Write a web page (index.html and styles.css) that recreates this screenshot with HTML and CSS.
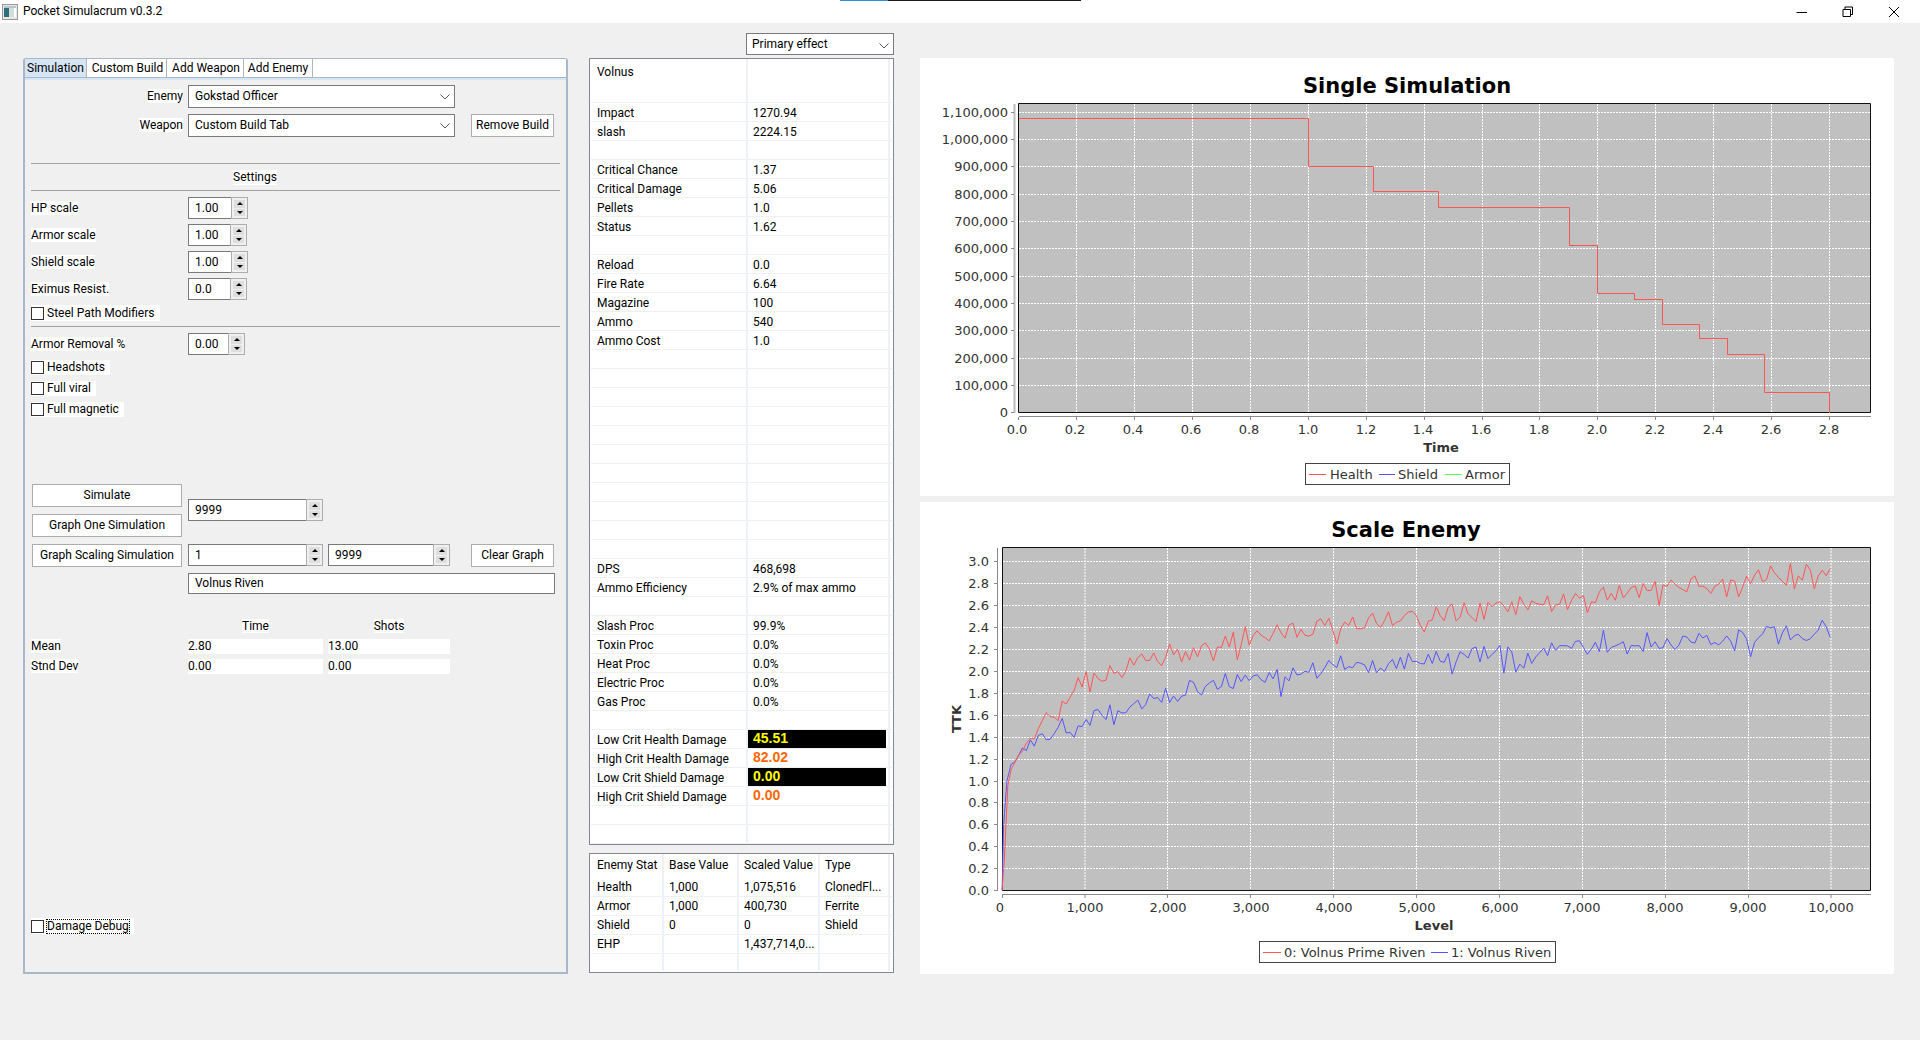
FILE: index.html
```html
<!DOCTYPE html>
<html lang="en">
<head>
<meta charset="utf-8">
<title>Pocket Simulacrum v0.3.2</title>
<link rel="stylesheet" href="styles.css">
</head>
<body>
<div class="taskstrip"><span class="strip-blue"></span><span class="strip-black"></span></div>
<header class="titlebar">
  <svg class="appicon" width="16" height="16" viewBox="0 0 16 16"><rect x="0.5" y="0.5" width="15" height="15" fill="#e8e8e8" stroke="#9a9a9a"/><rect x="2" y="2" width="12" height="2" fill="#b9c4cc"/><rect x="2" y="4" width="5" height="9" fill="#2f6f78"/><rect x="7" y="4" width="5" height="9" fill="#cfe0dc"/><rect x="12" y="4" width="2" height="9" fill="#fff"/></svg>
  <span class="apptitle">Pocket Simulacrum v0.3.2</span>
  <div class="winbtns">
    <svg width="12" height="12" viewBox="0 0 12 12"><path d="M0.5 6.5H11" stroke="#000" fill="none"/></svg>
    <svg width="12" height="12" viewBox="0 0 12 12"><path d="M3 3V1H10.500V8.500H8.500M1 3.500H8.500V10.500H1Z" stroke="#000" fill="none"/></svg>
    <svg width="12" height="12" viewBox="0 0 12 12"><path d="M1 1L11 11M11 1L1 11" stroke="#000" fill="none"/></svg>
  </div>
</header>

<main class="main">
  <section class="panel">
    <nav class="tabs">
      <span class="tab tab-active tab-a">Simulation</span>
      <span class="tab tab-b">Custom Build</span>
      <span class="tab tab-c">Add Weapon</span>
      <span class="tab tab-d">Add Enemy</span>
    </nav>
    <div class="tabband"></div>
    <div class="form">
      <div class="row h23">
        <div class="lblcol right"><span class="lbl">Enemy</span></div>
        <div class="combo w267"><span>Gokstad Officer</span><svg class="chev" width="10" height="6" viewBox="0 0 10 6"><path d="M0.500 0.500L5 5L9.500 0.500" fill="none" stroke="#555"/></svg></div>
      </div>
      <div class="row h23 mt6">
        <div class="lblcol right"><span class="lbl">Weapon</span></div>
        <div class="combo w267"><span>Custom Build Tab</span><svg class="chev" width="10" height="6" viewBox="0 0 10 6"><path d="M0.500 0.500L5 5L9.500 0.500" fill="none" stroke="#555"/></svg></div>
        <div class="btn btn-side ml16">Remove Build</div>
      </div>
      <hr class="rule mt26">
      <div class="settings"><span class="lbl">Settings</span></div>
      <hr class="rule">
      <div class="row h22 mt6"><div class="lblcol"><span class="lbl">HP scale</span></div>
        <div class="spin w60"><span class="spin-val">1.00</span><span class="spin-btns"><i class="up"></i><i class="down"></i></span></div></div>
      <div class="row h22 mt5"><div class="lblcol"><span class="lbl">Armor scale</span></div>
        <div class="spin w59"><span class="spin-val">1.00</span><span class="spin-btns"><i class="up"></i><i class="down"></i></span></div></div>
      <div class="row h22 mt5"><div class="lblcol"><span class="lbl">Shield scale</span></div>
        <div class="spin w60"><span class="spin-val">1.00</span><span class="spin-btns"><i class="up"></i><i class="down"></i></span></div></div>
      <div class="row h22 mt5"><div class="lblcol"><span class="lbl">Eximus Resist.</span></div>
        <div class="spin w59"><span class="spin-val">0.0</span><span class="spin-btns"><i class="up"></i><i class="down"></i></span></div></div>
      <div class="row h16 mt5"><span class="check"><i class="box"></i><span>Steel Path Modifiers</span></span></div>
      <hr class="rule mt5">
      <div class="row h22 mt6"><div class="lblcol"><span class="lbl">Armor Removal %</span></div>
        <div class="spin w57"><span class="spin-val">0.00</span><span class="spin-btns"><i class="up"></i><i class="down"></i></span></div></div>
      <div class="row h15 mt5"><span class="check"><i class="box"></i><span>Headshots</span></span></div>
      <div class="row h15 mt6"><span class="check"><i class="box"></i><span>Full viral</span></span></div>
      <div class="row h15 mt6"><span class="check"><i class="box"></i><span>Full magnetic</span></span></div>

      <div class="simblock">
        <div class="btncol">
          <div class="btn btn-main">Simulate</div>
          <div class="btn btn-main">Graph One Simulation</div>
        </div>
        <div class="spin w135 mt15"><span class="spin-val">9999</span><span class="spin-btns"><i class="up"></i><i class="down"></i></span></div>
      </div>
      <div class="row h23 mt7 start">
        <div class="btn btn-main">Graph Scaling Simulation</div>
        <div class="spin w135 ml6"><span class="spin-val">1</span><span class="spin-btns"><i class="up"></i><i class="down"></i></span></div>
        <div class="spin w122 ml5"><span class="spin-val">9999</span><span class="spin-btns"><i class="up"></i><i class="down"></i></span></div>
        <div class="btn btn-side ml21">Clear Graph</div>
      </div>
      <div class="row mt6"><div class="lblcol"></div><div class="textfield">Volnus Riven</div></div>
      <div class="row h16 mt24"><div class="lblcol"></div><div class="col135 center"><span class="lbl">Time</span></div><div class="col122 center ml5"><span class="lbl">Shots</span></div></div>
      <div class="row h15 mt5"><div class="lblcol"><span class="lbl">Mean</span></div><div class="col135 field">2.80</div><div class="col122 field ml5">13.00</div></div>
      <div class="row h15 mt5"><div class="lblcol"><span class="lbl">Stnd Dev</span></div><div class="col135 field">0.00</div><div class="col122 field ml5">0.00</div></div>
      <div class="row h16 debugrow"><span class="check"><i class="box"></i><span class="focus">Damage Debug</span></span></div>
    </div>
  </section>

  <section class="midcol">
    <div class="comborow"><div class="combo w148"><span>Primary effect</span><svg class="chev" width="10" height="6" viewBox="0 0 10 6"><path d="M0.500 0.500L5 5L9.500 0.500" fill="none" stroke="#555"/></svg></div></div>
    <div class="tablebox statsbox">
      <table class="stats">
        <tr class="head"><td>Volnus</td><td></td><td></td></tr>
        <tr><td></td><td></td><td></td></tr>
        <tr><td>Impact</td><td>1270.94</td><td></td></tr>
        <tr><td>slash</td><td>2224.15</td><td></td></tr>
        <tr><td></td><td></td><td></td></tr>
        <tr><td>Critical Chance</td><td>1.37</td><td></td></tr>
        <tr><td>Critical Damage</td><td>5.06</td><td></td></tr>
        <tr><td>Pellets</td><td>1.0</td><td></td></tr>
        <tr><td>Status</td><td>1.62</td><td></td></tr>
        <tr><td></td><td></td><td></td></tr>
        <tr><td>Reload</td><td>0.0</td><td></td></tr>
        <tr><td>Fire Rate</td><td>6.64</td><td></td></tr>
        <tr><td>Magazine</td><td>100</td><td></td></tr>
        <tr><td>Ammo</td><td>540</td><td></td></tr>
        <tr><td>Ammo Cost</td><td>1.0</td><td></td></tr>
        <tr><td></td><td></td><td></td></tr>
        <tr><td></td><td></td><td></td></tr>
        <tr><td></td><td></td><td></td></tr>
        <tr><td></td><td></td><td></td></tr>
        <tr><td></td><td></td><td></td></tr>
        <tr><td></td><td></td><td></td></tr>
        <tr><td></td><td></td><td></td></tr>
        <tr><td></td><td></td><td></td></tr>
        <tr><td></td><td></td><td></td></tr>
        <tr><td></td><td></td><td></td></tr>
        <tr><td></td><td></td><td></td></tr>
        <tr><td>DPS</td><td>468,698</td><td></td></tr>
        <tr><td>Ammo Efficiency</td><td>2.9% of max ammo</td><td></td></tr>
        <tr><td></td><td></td><td></td></tr>
        <tr><td>Slash Proc</td><td>99.9%</td><td></td></tr>
        <tr><td>Toxin Proc</td><td>0.0%</td><td></td></tr>
        <tr><td>Heat Proc</td><td>0.0%</td><td></td></tr>
        <tr><td>Electric Proc</td><td>0.0%</td><td></td></tr>
        <tr><td>Gas Proc</td><td>0.0%</td><td></td></tr>
        <tr><td></td><td></td><td></td></tr>
        <tr><td>Low Crit Health Damage</td><td class="dmgcell"><div class="dmg dmg-low">45.51</div></td><td></td></tr>
        <tr><td>High Crit Health Damage</td><td class="dmgcell"><div class="dmg dmg-high">82.02</div></td><td></td></tr>
        <tr><td>Low Crit Shield Damage</td><td class="dmgcell"><div class="dmg dmg-low">0.00</div></td><td></td></tr>
        <tr><td>High Crit Shield Damage</td><td class="dmgcell"><div class="dmg dmg-high">0.00</div></td><td></td></tr>
        <tr><td></td><td></td><td></td></tr>
        <tr><td></td><td></td><td></td></tr>
      </table>
    </div>
    <div class="tablebox enemybox">
      <table class="enemy">
        <tr class="head"><td>Enemy Stat</td><td>Base Value</td><td>Scaled Value</td><td>Type</td><td></td></tr>
        <tr><td>Health</td><td>1,000</td><td>1,075,516</td><td>ClonedFl...</td><td></td></tr>
        <tr><td>Armor</td><td>1,000</td><td>400,730</td><td>Ferrite</td><td></td></tr>
        <tr><td>Shield</td><td>0</td><td>0</td><td>Shield</td><td></td></tr>
        <tr><td>EHP</td><td></td><td>1,437,714,0...</td><td></td><td></td></tr>
        <tr class="short"><td></td><td></td><td></td><td></td><td></td></tr>
      </table>
    </div>
  </section>

  <section class="charts">
    <div class="chart chart-one">
      <svg width="974" height="438" viewBox="0 0 974 438">
        <text class="c-title" x="487" y="34.500" text-anchor="middle">Single Simulation</text>
        <rect class="plot" x="98.500" y="45.500" width="852" height="309"/>
        <path class="grid" d="M99 54.500H950M99 81.500H950M99 108.500H950M99 136.500H950M99 163.500H950M99 190.500H950M99 218.500H950M99 245.500H950M99 272.500H950M99 300.500H950M99 327.500H950"/>
        <path class="grid" d="M156.500 46V354M214.500 46V354M272.500 46V354M330.500 46V354M388.500 46V354M446.500 46V354M504.500 46V354M562.500 46V354M619.500 46V354M677.500 46V354M735.500 46V354M793.500 46V354M851.500 46V354M909.500 46V354"/>
        <path class="frame" d="M98.500 354.500V45.500H950.500V354.500Z"/>
        <path class="axis axis-y" d="M94.500 46V355"/>
        <path class="tick" d="M91 54.500H94M91 81.500H94M91 108.500H94M91 136.500H94M91 163.500H94M91 190.500H94M91 218.500H94M91 245.500H94M91 272.500H94M91 300.500H94M91 327.500H94M91 354.500H94"/>
        <path class="axis" d="M99 358.500H951"/>
        <path class="tick" d="M98.500 359V362M156.500 359V362M214.500 359V362M272.500 359V362M330.500 359V362M388.500 359V362M446.500 359V362M504.500 359V362M562.500 359V362M619.500 359V362M677.500 359V362M735.500 359V362M793.500 359V362M851.500 359V362M909.500 359V362"/>
        <polyline class="s-red" points="99,60.500 388.500,60.500 388.500,108.500 453.500,108.500 453.500,133.500 518.500,133.500 518.500,149.500 649.500,149.500 649.500,187.500 677.500,187.500 677.500,235.500 714.500,235.500 714.500,241.500 742.500,241.500 742.500,266.500 779.500,266.500 779.500,280.500 807.500,280.500 807.500,296.500 844.500,296.500 844.500,334.500 909.500,334.500 909.500,355"/>
        <g class="c-ylab">
          <text x="88" y="59">1,100,000</text><text x="88" y="86">1,000,000</text><text x="88" y="113">900,000</text><text x="88" y="141">800,000</text><text x="88" y="168">700,000</text><text x="88" y="195">600,000</text><text x="88" y="223">500,000</text><text x="88" y="250">400,000</text><text x="88" y="277">300,000</text><text x="88" y="305">200,000</text><text x="88" y="332">100,000</text><text x="88" y="359">0</text>
        </g>
        <g class="c-xlab">
          <text x="97" y="375.500">0.0</text><text x="155" y="375.500">0.2</text><text x="213" y="375.500">0.4</text><text x="271" y="375.500">0.6</text><text x="329" y="375.500">0.8</text><text x="388" y="375.500">1.0</text><text x="446" y="375.500">1.2</text><text x="503" y="375.500">1.4</text><text x="561" y="375.500">1.6</text><text x="619" y="375.500">1.8</text><text x="677" y="375.500">2.0</text><text x="735" y="375.500">2.2</text><text x="793" y="375.500">2.4</text><text x="851" y="375.500">2.6</text><text x="909" y="375.500">2.8</text>
        </g>
        <text class="c-axis" x="521" y="394" text-anchor="middle">Time</text>
        <rect class="legend" x="385.500" y="405.500" width="204" height="21"/>
        <path class="s-red" d="M389 416.500H406"/><path class="s-blue" d="M459 416.500H475"/><path class="s-green" d="M525 416.500H542"/>
        <text class="c-leg" x="410" y="421">Health</text><text class="c-leg" x="478" y="421">Shield</text><text class="c-leg" x="545" y="421">Armor</text>
      </svg>
    </div>
    <div class="chart chart-two">
      <svg width="974" height="472" viewBox="0 0 974 472">
        <text class="c-title" x="486" y="34.500" text-anchor="middle">Scale Enemy</text>
        <rect class="plot" x="82.500" y="45.500" width="868" height="343"/>
        <path class="grid" d="M83 59.500H950M83 81.500H950M83 103.500H950M83 125.500H950M83 147.500H950M83 169.500H950M83 191.500H950M83 213.500H950M83 235.500H950M83 257.500H950M83 279.500H950M83 300.500H950M83 322.500H950M83 344.500H950M83 366.500H950"/>
        <path class="grid" d="M165 46V388M247.500 46V388M330.500 46V388M413.500 46V388M496.500 46V388M579.500 46V388M662.500 46V388M745.500 46V388M828.500 46V388M911 46V388"/>
        <path class="frame" d="M82.500 388.500V45.500H950.500V388.500Z"/>
        <path class="axis" d="M77.500 46V389"/>
        <path class="tick" d="M74 59.500H77M74 81.500H77M74 103.500H77M74 125.500H77M74 147.500H77M74 169.500H77M74 191.500H77M74 213.500H77M74 235.500H77M74 257.500H77M74 279.500H77M74 300.500H77M74 322.500H77M74 344.500H77M74 366.500H77M74 388.500H77"/>
        <path class="axis" d="M82 392.500H951"/>
        <path class="tick" d="M82.500 393V396M165 393V396M247.500 393V396M330.500 393V396M413.500 393V396M496.500 393V396M579.500 393V396M662.500 393V396M745.500 393V396M828.500 393V396M911 393V396"/>
        <polyline class="s-blue" id="series-blue" points=""/>
        <polyline class="s-red" id="series-red" points=""/>
        <g class="c-ylab">
          <text x="69" y="64">3.0</text><text x="69" y="86">2.8</text><text x="69" y="108">2.6</text><text x="69" y="130">2.4</text><text x="69" y="152">2.2</text><text x="69" y="174">2.0</text><text x="69" y="196">1.8</text><text x="69" y="218">1.6</text><text x="69" y="240">1.4</text><text x="69" y="262">1.2</text><text x="69" y="284">1.0</text><text x="69" y="305">0.8</text><text x="69" y="327">0.6</text><text x="69" y="349">0.4</text><text x="69" y="371">0.2</text><text x="69" y="393">0.0</text>
        </g>
        <g class="c-xlab">
          <text x="80" y="409.500">0</text><text x="165" y="409.500">1,000</text><text x="248" y="409.500">2,000</text><text x="331" y="409.500">3,000</text><text x="414" y="409.500">4,000</text><text x="497" y="409.500">5,000</text><text x="580" y="409.500">6,000</text><text x="662" y="409.500">7,000</text><text x="745" y="409.500">8,000</text><text x="828" y="409.500">9,000</text><text x="911" y="409.500">10,000</text>
        </g>
        <text class="c-axis" x="514" y="428" text-anchor="middle">Level</text>
        <text class="c-axis" x="41" y="217" text-anchor="middle" transform="rotate(-90 41 217)">TTK</text>
        <rect class="legend" x="339.500" y="439.500" width="296" height="21"/>
        <path class="s-red" d="M343 450.500H361"/><path class="s-blue" d="M511 450.500H528"/>
        <text class="c-leg" x="364" y="455">0: Volnus Prime Riven</text><text class="c-leg" x="531" y="455">1: Volnus Riven</text>
      </svg>
    </div>
  </section>
</main>
<script src="chart.js"></script>
</body>
</html>
```
FILE: styles.css
```css
* { box-sizing: border-box; }
html, body { margin: 0; padding: 0; }
body {
  width: 1920px; height: 1040px; overflow: hidden;
  background: #f0f0f0; color: #000;
  font-family: Roboto, "Liberation Sans", sans-serif; font-size: 12px; line-height: 15px;
  display: flex; flex-direction: column;
}
.taskstrip { position: absolute; top: 0; left: 840px; display: flex; height: 1px; }
.strip-blue { width: 48px; background: #2a8fdc; }
.strip-black { width: 193px; background: #1a1a1a; }

.titlebar { height: 23px; background: #fff; display: flex; align-items: center; padding-left: 2px; flex: none; }
.appicon { margin-right: 5px; }
.winbtns { margin-left: auto; display: flex; align-items: center; gap: 34px; padding-right: 20px; padding-left: 0; }

.main { display: flex; flex: 1; padding-left: 23px; align-items: flex-start; }

/* left panel */
.panel {
  width: 545px; height: 916px; margin-top: 35px;
  border: 2px solid #a9b8c9; border-top-width: 1px; border-radius: 3px 3px 0 0;
  display: flex; flex-direction: column;
}
.tabs { display: flex; height: 19px; background: #fff; border-bottom: 1px solid #a9b8c9; }
.tab { display: flex; align-items: center; justify-content: center; border-right: 1px solid #b5b5b5; padding-top: 1px; }
.tab-active { background: #d6e5f3; }
.tab-a { width: 62px; } .tab-b { width: 80px; padding-left: 2px; } .tab-c { width: 77px; padding-left: 2px; } .tab-d { width: 69px; }
.tabband { height: 2px; background: #d6e5f3; }
.form { flex: 1; padding: 5px 6px 0; display: flex; flex-direction: column; }
.row { display: flex; align-items: center; flex: none; }
.row.start { align-items: flex-start; }
.h22 { height: 22px; } .h23 { height: 23px; } .h15 { height: 15px; } .h16 { height: 16px; }
.mt4 { margin-top: 4px; } .mt5 { margin-top: 5px; } .mt6 { margin-top: 6px; } .mt7 { margin-top: 7px; }
.mt15 { margin-top: 15px; } .mt24 { margin-top: 24px; } .mt26 { margin-top: 26px; }
.ml5 { margin-left: 5px; } .ml6 { margin-left: 6px; } .ml16 { margin-left: 16px; } .ml21 { margin-left: 21px; }
.lblcol { width: 157px; flex: none; }
.lblcol.right { text-align: right; padding-right: 5px; }
.lbl { background: #fff; }
.rule { margin: 0; border: 0; border-top: 1px solid #a0a0a0; height: 0; flex: none; }
.rule.mt26 { margin-top: 26px; }
.rule.mt5 { margin-top: 5px; }
.settings { height: 26px; display: flex; align-items: center; justify-content: center; width: 448px; flex: none; padding-top: 1px; }

.combo {
  height: 23px; background: #fff; border: 1px solid #7a7a7a;
  display: flex; align-items: center; justify-content: space-between; padding: 0 4px 1px 6px; flex: none;
}
.chev { margin-top: 2px; }
.w267 { width: 267px; }
.w148 { width: 148px; height: 22px; padding: 1px 4px 0 5px; }

.btn { height: 23px; background: #fff; border: 1px solid #adadad; display: flex; align-items: center; justify-content: center; flex: none; }
.btn-side { width: 83px; }
.btn-main { width: 150px; margin-left: 1px; }

.spin { display: flex; height: 22px; flex: none; }
.spin-val { flex: 1; background: #fff; border: 1px solid #7a7a7a; border-right: 0; padding-left: 6px; display: flex; align-items: center; }
.spin-btns { width: 17px; border: 1px solid #adadad; padding: 2px; display: flex; flex-direction: column; gap: 1px; background: #f0f0f0; }
.spin-btns i { flex: 1; background: #dedede; display: flex; align-items: center; justify-content: center; }
.up::before { content: ""; border: 3px solid transparent; border-top: 0; border-bottom: 3px solid #000; }
.down::before { content: ""; border: 3px solid transparent; border-bottom: 0; border-top: 3px solid #000; }
.w60 { width: 60px; } .w59 { width: 59px; } .w57 { width: 57px; }
.w135 { width: 135px; } .w122 { width: 122px; }

.check { display: inline-flex; align-items: center; background: #fff; height: 100%; padding-right: 5px; }
.box { width: 13px; height: 13px; border: 1px solid #333; background: #fff; margin-right: 3px; flex: none; }
.focus { outline: 1px dotted #000; outline-offset: 0; line-height: 13px; }

.simblock { display: flex; margin-top: 67px; flex: none; gap: 6px; height: 53px; }
.btncol { display: flex; flex-direction: column; gap: 7px; }
.textfield { width: 367px; height: 21px; background: #fff; border: 1px solid #7a7a7a; padding-left: 6px; display: flex; align-items: center; }
.col135 { width: 135px; } .col122 { width: 122px; }
.center { text-align: center; }
.field { background: #fff; height: 15px; }
.debugrow { margin-top: 244px; }

/* middle */
.midcol { width: 305px; margin-left: 21px; padding-top: 10px; display: flex; flex-direction: column; }
.comborow { display: flex; justify-content: flex-end; height: 22px; }
.tablebox { background: #fff; border: 1px solid #828790; padding-left: 1px; }
.statsbox { margin-top: 3px; height: 787px; }
.enemybox { margin-top: 8px; height: 120px; }
table { border-collapse: separate; border-spacing: 0; table-layout: fixed; }
td { height: 19px; padding: 1px 0 0 5px; border-bottom: 1px solid #f0f0f0; border-right: 2px solid #eef1f9; white-space: nowrap; overflow: hidden; line-height: 15px; }
td:first-child { padding-left: 6px; }
td:last-child { padding: 0; border-right: 0; }
.head td { border-bottom: 0; border-right-color: #f0f0f0; }
.stats { width: 301px; }
.stats td { padding-top: 2px; }
.stats td:nth-child(1) { width: 157px; }
.stats td:nth-child(2) { width: 142px; }
.stats td:nth-child(3) { width: 2px; padding: 0; }
.stats .head td { height: 25px; padding-top: 1px; }
.enemy { width: 301px; }
.enemy td:nth-child(1) { width: 73px; }
.enemy td:nth-child(2) { width: 75px; }
.enemy td:nth-child(3) { width: 81px; }
.enemy td:nth-child(4) { width: 70px; }
.enemy td:nth-child(5) { width: 2px; }
.enemy .head td { height: 24px; padding-top: 0; padding-bottom: 2px; }
.enemy .short td { height: 17px; border-bottom: 0; }
.stats .dmgcell { padding-top: 0; }
.dmg { font-family: "Liberation Sans", Arial, sans-serif; font-weight: 700; font-size: 14px; height: 18px; line-height: 16px; margin-left: -5px; padding-left: 5px; width: 138px; }
.dmg-low { background: #000; color: #ffff00; }
.dmg-high { color: #ff6600; }

/* charts */
.charts { width: 974px; margin-left: 26px; margin-top: 35px; display: flex; flex-direction: column; gap: 6px; }
.chart { background: #fff; }
.chart-one { height: 438px; }
.chart-two { height: 472px; }
.chart svg { display: block; }
.plot { fill: #c0c0c0; }
.grid { fill: none; stroke: #fff; stroke-width: 1; stroke-dasharray: 2 1; }
.frame { fill: none; stroke: #111; stroke-width: 1; }
.axis { fill: none; stroke: #8a8a8a; stroke-width: 1; }
.axis-y { stroke: #bbb; stroke-width: 2; }
.tick { fill: none; stroke: #8a8a8a; stroke-width: 1; }
.s-red { fill: none; stroke: #ff5555; stroke-width: 1; }
.s-blue { fill: none; stroke: #5555ff; stroke-width: 1; }
.s-green { fill: none; stroke: #55ff55; stroke-width: 1; }
svg text { font-family: "DejaVu Sans", sans-serif; }
.c-title { font-size: 21px; font-weight: 700; fill: #000; }
.c-ylab text { font-size: 13px; fill: #333; text-anchor: end; }
.c-xlab text { font-size: 13px; fill: #333; text-anchor: middle; }
.c-axis { font-size: 13px; font-weight: 700; fill: #333; }
.c-leg { font-size: 13px; fill: #333; }
.legend { fill: #fff; stroke: #444; stroke-width: 1; }
```
FILE: chart.js
```js
// Draws the two noisy TTK series of the "Scale Enemy" chart.
(function () {
  var X0 = 82, XK = 0.0829, Y0 = 388.3, YK = 109.65;
  function rng(seed) {
    return function () {
      seed = (seed + 0x6D2B79F5) | 0;
      var t = Math.imul(seed ^ (seed >>> 15), 1 | seed);
      t = (t + Math.imul(t ^ (t >>> 7), 61 | t)) ^ t;
      return ((t ^ (t >>> 14)) >>> 0) / 4294967296;
    };
  }
  function interp(a, v) {
    for (var i = 1; i < a.length; i++) {
      if (v <= a[i][0]) {
        var f = (v - a[i - 1][0]) / (a[i][0] - a[i - 1][0]);
        return a[i - 1][1] + f * (a[i][1] - a[i - 1][1]);
      }
    }
    return a[a.length - 1][1];
  }
  var red = [[1, 0], [30, 0.3], [70, 0.95], [110, 1.1], [250, 1.3], [500, 1.55], [1000, 1.92], [2000, 2.13], [3000, 2.3], [4000, 2.42], [5000, 2.5], [6000, 2.6], [7000, 2.68], [8000, 2.76], [9000, 2.83], [10000, 2.92]];
  var blue = [[1, 0], [20, 0.6], [60, 1.0], [110, 1.15], [250, 1.28], [500, 1.42], [1000, 1.56], [2000, 1.78], [3000, 1.92], [4000, 2.03], [5000, 2.11], [6000, 2.16], [7000, 2.2], [8000, 2.27], [9000, 2.31], [10000, 2.37]];
  function build(id, curve, seed) {
    var r = rng(seed), pts = [], v;
    [1, 10, 20, 30, 40, 50, 60, 70, 80, 90, 100, 110].forEach(function (w) {
      pts.push((X0 + XK * w).toFixed(1) + ',' + (Y0 - YK * interp(curve, w)).toFixed(1));
    });
    for (v = 150; v <= 10000; v += 48) {
      var amp = Math.min(1, v / 600);
      var n = (r() - 0.5) * 0.15 * amp;
      if (r() < 0.2) n -= 0.1 * amp * r() * 1.4;
      if (r() < 0.12) n += 0.08 * amp;
      pts.push((X0 + XK * v).toFixed(1) + ',' + (Y0 - YK * (interp(curve, v) + n)).toFixed(1));
    }
    document.getElementById(id).setAttribute('points', pts.join(' '));
  }
  build('series-red', red, 11);
  build('series-blue', blue, 29);
})();
```
